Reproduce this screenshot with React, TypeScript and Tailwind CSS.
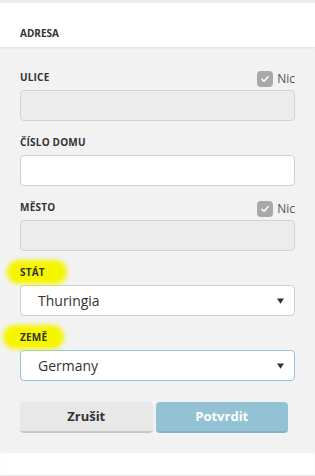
import React from 'react';

const font = { fontFamily: '"Open Sans", "Liberation Sans", sans-serif' };

const Check: React.FC = () => (
  <span className="flex items-center gap-[4px] mt-[3px]">
    <span className="w-[16px] h-[16px] rounded-[4px] bg-[#a9a9a9] flex items-center justify-center">
      <svg viewBox="0 0 16 16" className="w-[10px] h-[10px]">
        <path d="M3 8.5 L6.5 11.5 L13 4.5" fill="none" stroke="#fff" strokeWidth="2.4" strokeLinecap="round" strokeLinejoin="round" />
      </svg>
    </span>
    <span className="text-[12px] leading-[16px] text-[#555]">Nic</span>
  </span>
);

const Label: React.FC<{ text: string; nic?: boolean; mark?: string }> = ({ text, nic, mark }) => (
  <div className="flex items-center justify-between h-[16px] mb-[5px]">
    <span className="relative text-[10px] leading-[16px] font-bold text-[#333] tracking-[0.2px]">
      {mark && <span className={`absolute -top-[4px] -bottom-[4px] rounded-full bg-[#f5f500] blur-[2px] ${mark}`} />}
      <span className="relative">{text}</span>
    </span>
    {nic && <Check />}
  </div>
);

const Select: React.FC<{ value: string; focus?: boolean }> = ({ value, focus }) => (
  <div
    className={`h-[31px] rounded-[4px] bg-white border flex items-center justify-between pl-[17px] pr-[10px] ${
      focus ? 'border-[#8ec6dc]' : 'border-[#cfcfcf]'
    }`}
  >
    <span className="text-[14px] text-[#333]">{value}</span>
    <svg viewBox="0 0 8 6" className="w-[7px] h-[6px]">
      <path d="M0 0 H8 L4 6 Z" fill="#333" />
    </svg>
  </div>
);

export default function App() {
  return (
    <div className="w-[315px] h-[476px] bg-white flex flex-col" style={font}>
      <div className="h-[3px] bg-[#ececec]" />
      <div className="h-[44px] bg-white pt-[22px] px-[20px] relative z-10 shadow-[0_1px_2px_rgba(0,0,0,0.08)]">
        <span className="block text-[10px] leading-[16px] font-bold text-[#333]">ADRESA</span>
      </div>
      <div className="bg-[#f2f2f2] px-[20px] pt-[22px] pb-[19px] flex flex-col gap-[13px]">
        <div>
          <Label text="ULICE" nic />
          <div className="h-[31px] rounded-[4px] bg-[#ececec] border border-[#d3d3d3]" />
        </div>
        <div>
          <Label text="ČÍSLO DOMU" />
          <div className="h-[31px] rounded-[4px] bg-white border border-[#cfcfcf]" />
        </div>
        <div>
          <Label text="MĚSTO" nic />
          <div className="h-[31px] rounded-[4px] bg-[#ececec] border border-[#d3d3d3]" />
        </div>
        <div>
          <Label text="STÁT" mark="-left-[13px] -right-[22px]" />
          <Select value="Thuringia" />
        </div>
        <div>
          <Label text="ZEMĚ" mark="-left-[17px] -right-[17px]" />
          <Select value="Germany" focus />
        </div>
        <div className="mt-[8px] flex gap-[3px] pr-[7px]">
          <button className="flex-1 h-[31px] rounded-[4px] bg-[#e8e8e8] border-b-[2px] border-[#c6c6c6] text-[13px] font-bold text-[#333]">
            Zrušit
          </button>
          <button className="flex-1 h-[31px] rounded-[4px] bg-[#93c2d4] border-b-[2px] border-[#84b3c5] text-[13px] font-bold text-white">
            Potvrdit
          </button>
        </div>
      </div>
      <div className="flex-1 bg-white shadow-[inset_0_1px_2px_rgba(0,0,0,0.06)]" />
      <div className="h-[1px] bg-[#e6e6e6]" />
    </div>
  );
}
